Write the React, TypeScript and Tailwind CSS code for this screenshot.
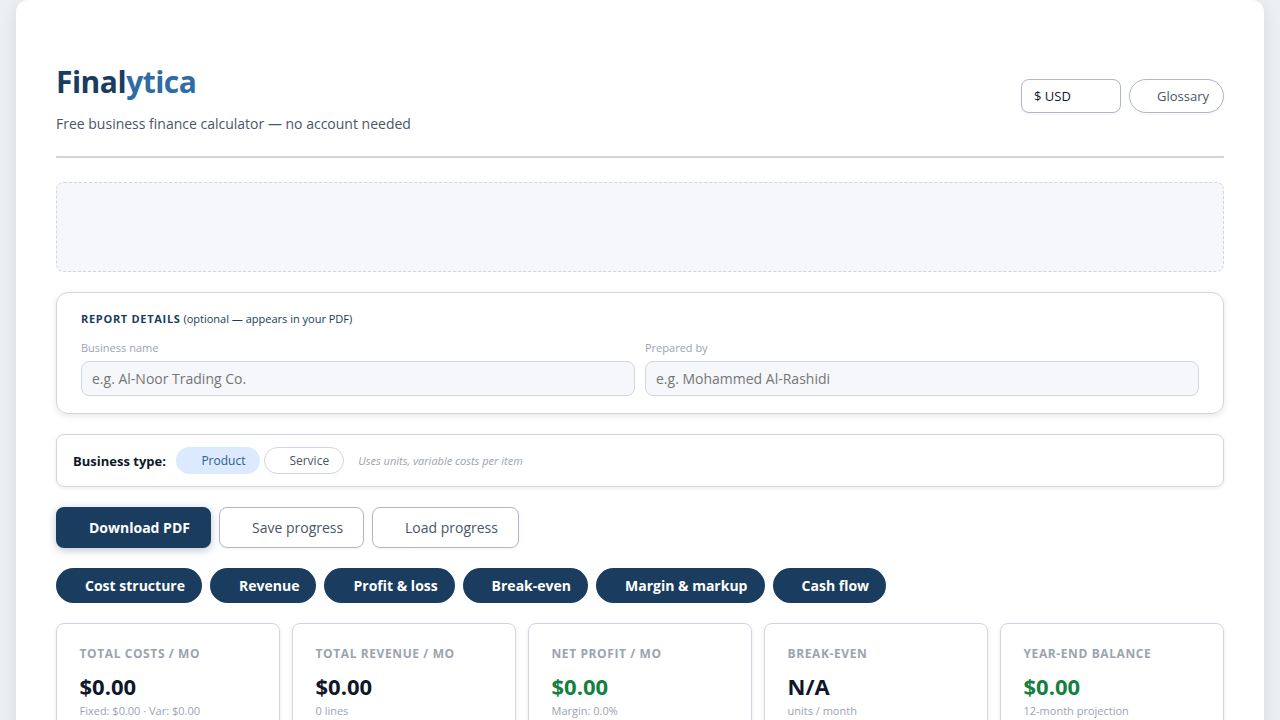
const stats = [
    { label: "Total costs / mo", value: "$0.00", sub: "Fixed: $0.00 · Var: $0.00" },
    { label: "Total revenue / mo", value: "$0.00", sub: "0 lines" },
    { label: "Net profit / mo", value: "$0.00", sub: "Margin: 0.0%", positive: true },
    { label: "Break-even", value: "N/A", sub: "units / month" },
    { label: "Year-end balance", value: "$0.00", sub: "12-month projection", positive: true },
]

const tabs = [
    { name: "Cost structure", size: "w-[146px] pl-[29px]" },
    { name: "Revenue", size: "w-[106px] pl-[29px]" },
    { name: "Profit & loss", size: "w-[131px] pl-[29.5px]" },
    { name: "Break-even", size: "w-[125px] pl-[28.6px]" },
    { name: "Margin & markup", size: "w-[169px] pl-[29px]" },
    { name: "Cash flow", size: "w-[113px] pl-[28.6px]" },
]

function Header() {
    return (
        <header className="flex items-center justify-between h-[98px] border-b-2 border-[#d1d5e0] pb-[24px]">
            <div>
                <h1 className="pt-px text-[30px] leading-[46px] font-bold tracking-[-0.5px] text-[#1a3c5e]">
                    Final<span className="text-[#2e6da4]">ytica</span>
                </h1>
                <p className="mt-[8px] text-[14px] leading-[22px] text-[#4a5568]">Free business finance calculator — no account needed</p>
            </div>
            <div className="flex gap-2">
                <button className="w-[100px] h-[34px] rounded-lg border border-[#b0b8c8] bg-white pt-0.5 pl-3 text-left text-[13px] text-[#0f172a] shadow-[0_1px_3px_rgba(15,23,42,0.06)]">$ USD</button>
                <button className="w-[95px] h-[34px] rounded-full border border-[#b0b8c8] bg-white pt-0.5 pl-[27px] text-left text-[13px] text-[#4a5568] shadow-[0_1px_3px_rgba(15,23,42,0.06)]">Glossary</button>
            </div>
        </header>
    )
}

function Field({ label, placeholder }: { label: string; placeholder: string }) {
    return (
        <label className="flex-1 block">
            <span className="block text-[11px] leading-[17px] text-[#9ca3af]">{label}</span>
            <input
                placeholder={placeholder}
                className="block mt-[5px] w-full h-[35px] rounded-lg border border-[#d1d5e0] bg-[#f5f7fb] px-[10px] text-[14px] placeholder:text-[#757575]"
            />
        </label>
    )
}

export default function App() {
    return (
        <div className="h-screen overflow-hidden bg-[#eceff3] px-4 font-['Open_Sans',sans-serif]">
            <main className="h-[760px] rounded-t-xl bg-white px-10 pt-[60px] shadow-[0_4px_16px_rgba(15,23,42,0.1)]">
                <Header />
                <div className="mt-6 h-[90px] rounded-lg border border-dashed border-[#d1d5e0] bg-[#f5f7fb]"></div>

                <section className="mt-5 h-[122px] rounded-xl border border-[#d1d5e0] px-6 pt-[17px] shadow-[0_2px_6px_rgba(15,23,42,0.1)]">
                    <h2 className="text-[11px] leading-[18px] text-[#1a3c5e]">
                        <span className="font-bold uppercase tracking-[0.7px]">Report details</span> (optional — appears in your PDF)
                    </h2>
                    <div className="mt-[11px] flex gap-[10px]">
                        <Field label="Business name" placeholder="e.g. Al-Noor Trading Co." />
                        <Field label="Prepared by" placeholder="e.g. Mohammed Al-Rashidi" />
                    </div>
                </section>

                <section className="mt-5 flex h-[53px] items-center rounded-lg border border-[#d1d5e0] px-4 shadow-[0_1px_4px_rgba(15,23,42,0.08)]">
                    <h3 className="w-[103px] pt-0.5 text-[13px] font-bold text-[#0f172a]">Business type:</h3>
                    <button className="h-[27px] w-[84px] rounded-full bg-[#dbeafe] pl-[25.4px] text-left text-[12px] text-[#2a5f90]">Product</button>
                    <button className="ml-1 h-[27px] w-[80px] rounded-full border border-[#d1d5e0] pl-[24.4px] text-left text-[12px] text-[#4a5568]">Service</button>
                    <p className="ml-[14.3px] pt-0.5 text-[11px] italic text-[#9ca3af]">Uses units, variable costs per item</p>
                </section>

                <div className="mt-5 flex gap-2 text-[14px]">
                    <button className="h-[41px] w-[155px] rounded-lg bg-[#1a3c5e] pl-[33px] text-left font-bold text-white shadow-[0_2px_8px_rgba(26,60,94,0.3)]">Download PDF</button>
                    <button className="h-[41px] w-[145px] rounded-lg border border-[#b0b8c8] pl-8 text-left text-[#4a5568] shadow-[0_1px_3px_rgba(15,23,42,0.06)]">Save progress</button>
                    <button className="h-[41px] w-[147px] rounded-lg border border-[#b0b8c8] pl-8 text-left text-[#4a5568] shadow-[0_1px_3px_rgba(15,23,42,0.06)]">Load progress</button>
                </div>

                <nav className="mt-5 flex gap-2">
                    {tabs.map((tab) => (
                        <button key={tab.name} className={`${tab.size} h-[35px] rounded-full bg-[#1a3c5e] text-left text-[14px] font-bold whitespace-nowrap text-white`}>
                            {tab.name}
                        </button>
                    ))}
                </nav>

                <div className="mt-5 grid grid-cols-5 gap-3">
                    {stats.map((stat) => (
                        <div key={stat.label} className="h-[120px] rounded-lg border border-[#d1d5e0] px-[22.5px] pt-[20px] shadow-[0_1px_4px_rgba(15,23,42,0.08)]">
                            <h4 className="text-[12px] leading-[19px] font-bold uppercase tracking-[0.6px] text-[#9ca3af]">{stat.label}</h4>
                            <p className={`mt-[5px] text-[22px] leading-[36px] font-bold ${stat.positive ? "text-[#15803d]" : "text-[#0f172a]"}`}>{stat.value}</p>
                            <p className="text-[11px] leading-[13px] text-[#9ca3af]">{stat.sub}</p>
                        </div>
                    ))}
                </div>
            </main>
        </div>
    )
}
